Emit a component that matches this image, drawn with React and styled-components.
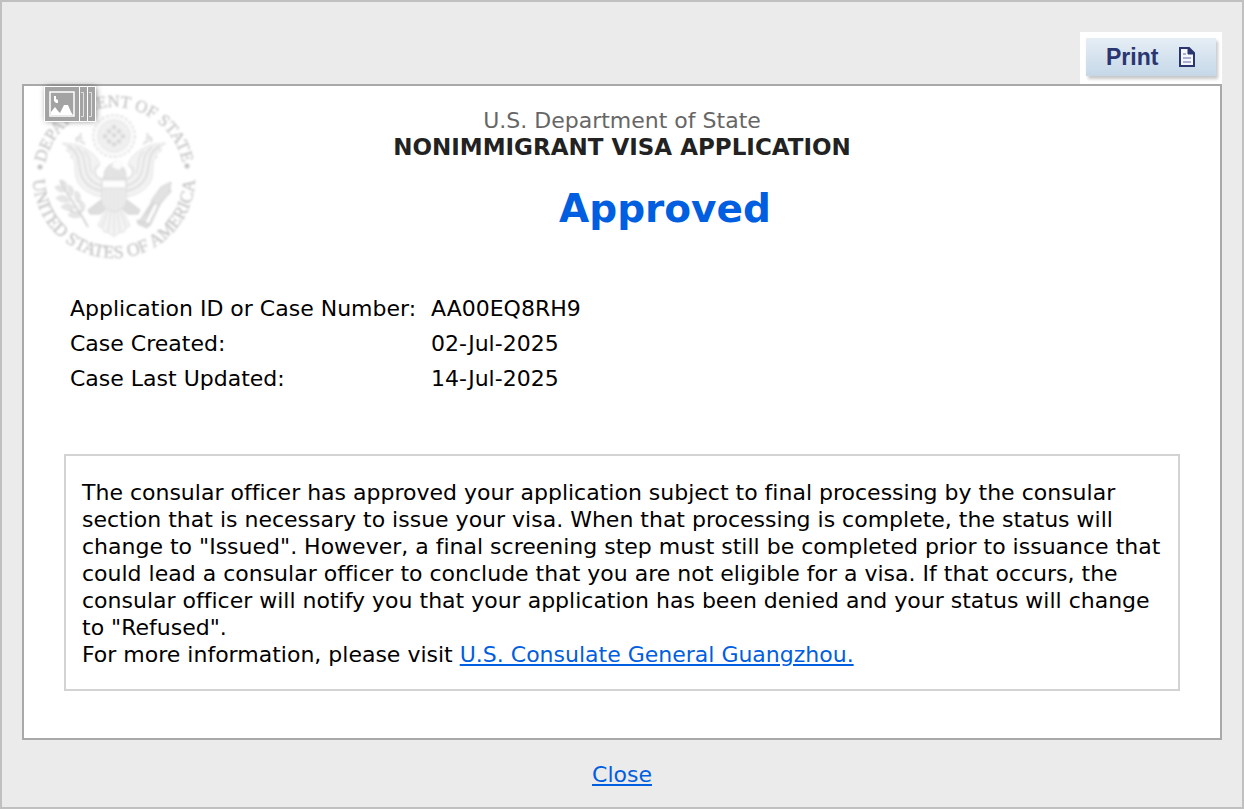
import React from 'react'
import styled, { createGlobalStyle } from 'styled-components'

const GlobalStyle = createGlobalStyle`
  * {
    box-sizing: border-box;
  }
  body {
    margin: 0;
    background: #ebebeb;
    color: #000;
    font-family: Verdana, "DejaVu Sans", sans-serif;
    font-size: 22px;
    font-variant-ligatures: none;
    line-height: 27px;
  }
`

const Frame = styled.div`
  min-height: 100vh;
  padding: 30px 20px 17px;
  border: 2px solid #c0c0c0;
  background: #ebebeb;
`

const Toolbar = styled.div`
  display: flex;
  justify-content: flex-end;
`

const PrintSlot = styled.div`
  padding: 6px 6px 8px;
  background: #fff;
`

const PrintButton = styled.button`
  display: flex;
  align-items: center;
  justify-content: space-between;
  width: 130px;
  height: 38px;
  padding: 0 20px;
  border: 0;
  background: linear-gradient(#e6eef5, #c5d8e8);
  box-shadow: 2px 3px 3px rgba(0, 0, 0, 0.22);
  color: #2b3670;
  font-family: "Liberation Sans", Arial, sans-serif;
  font-size: 23px;
  font-weight: bold;
  cursor: pointer;
`

const Panel = styled.main`
  padding-bottom: 47px;
  border: 2px solid #a9a9a9;
  background: #fff;
`

const Header = styled.header`
  display: grid;
  grid-template-columns: 180px 1fr 180px;
`

const SealBox = styled.div`
  position: relative;
  height: 184px;
`

const Seal = styled.svg`
  display: block;
  filter: blur(0.8px);
`

const GalleryBadge = styled.svg`
  position: absolute;
  left: 14px;
  top: -6px;
`

const Heading = styled.div`
  padding-top: 21px;
  text-align: center;
`

const Department = styled.div`
  color: #666;
`

const Title = styled.h1`
  margin: 0;
  color: #222;
  font-size: 23px;
  line-height: 27px;
`

const Status = styled.h2`
  margin: 24px 0 0;
  padding-left: 86px;
  color: #005ee0;
  font-size: 39px;
  line-height: 48px;
`

const Details = styled.table`
  margin: 21px 46px 0;
  border-collapse: collapse;
  th,
  td {
    height: 35px;
    padding: 0;
    font-weight: normal;
    text-align: left;
  }
  th {
    width: 361px;
  }
`

const Notice = styled.section`
  margin: 58px 40px 0;
  padding: 23px 14px 21px 16px;
  border: 2px solid #d3d3d3;
  p {
    margin: 0;
  }
`

const Link = styled.a`
  color: #005ee0;
  text-decoration: underline;
`

const Footer = styled.footer`
  padding-top: 21px;
  text-align: center;
`

const details = [
  { label: 'Application ID or Case Number:', value: 'AA00EQ8RH9' },
  { label: 'Case Created:', value: '02-Jul-2025' },
  { label: 'Case Last Updated:', value: '14-Jul-2025' },
]

const stars = [
  [0, -9], [-5, -5], [5, -5], [-9, 0], [0, -1], [9, 0], [-5, 5], [5, 5], [0, 8],
]

// one half of the spread wings, mirrored for the other side
const Wing = () => (
  <g>
    <path
      d="M38 57 C46 58 55 58 62 63 C69 67 74 72 76 79 C71 79 69 84 71 89 C73 93 76 94 78 94 L78 111 C65 109 56 102 53 94 C50 86 52 78 50 73 L46 71 L49 69 L42 64 L46 63Z"
      fill="#f3f3f3"
      stroke="#e2e2e2"
    />
    <path d="M44 60 C57 67 54 78 57 88 C60 98 68 103 78 105" stroke="#dedede" strokeWidth="2" />
    <path d="M52 61 C63 69 59 79 63 88 C66 95 71 98 78 100" stroke="#e0e0e0" strokeWidth="2" />
    <path d="M60 65 C68 71 64 80 68 88" stroke="#e4e4e4" strokeWidth="2" />
    <path d="M53 56 C51 51 56 50 58 53 M55 54 L61 58 M56 50 L57 47" stroke="#dadada" strokeWidth="2" />
    <path d="M75 80 C70 82 70 89 75 92 C79 94 82 91 82 87" stroke="#e0e0e0" strokeWidth="1.5" />
  </g>
)

const StateSeal = () => (
  <Seal width="180" height="184" viewBox="0 0 180 184" fill="none" role="img" aria-label="Department of State seal">
    <defs>
      <path id="seal-top" d="M20 91 A70 70 0 0 1 160 91" />
      <path id="seal-bottom" d="M9 91 A81 81 0 0 0 171 91" />
    </defs>
    <g
      fill="#c6c6c6"
      stroke="#c6c6c6"
      strokeWidth="0.3"
      fontFamily="Liberation Serif, Times New Roman, serif"
      textAnchor="middle"
    >
      <text fontSize="17">
        <textPath href="#seal-top" startOffset="50%">DEPARTMENT OF STATE</textPath>
      </text>
      <text fontSize="18">
        <textPath href="#seal-bottom" startOffset="50%">UNITED STATES OF AMERICA</textPath>
      </text>
    </g>
    <circle cx="16" cy="81" r="2.5" fill="#c4c4c4" />
    <circle cx="163" cy="80" r="2.5" fill="#c4c4c4" />

    <circle cx="90" cy="50" r="21" fill="#fafafa" stroke="#e4e4e4" strokeWidth="2" strokeDasharray="3 2" />
    <circle cx="90" cy="50" r="16" fill="#f0f0f0" stroke="#e2e2e2" />
    <g fill="#d6d6d6">
      {stars.map(([x, y]) => (
        <path
          key={`${x},${y}`}
          transform={`translate(${90 + x} ${50 + y})`}
          d="M0 -3 L1 -1 L3 -1 L1.5 1 L2 3 L0 2 L-2 3 L-1.5 1 L-3 -1 L-1 -1Z"
        />
      ))}
    </g>

    <Wing />
    <g transform="translate(180 0) scale(-1 1)">
      <Wing />
    </g>
    <path d="M80 93 C80 85 82 80 88 78 L91 75 L97 76 L96 79 C101 81 102 87 102 93Z" fill="#e3e3e3" stroke="#d6d6d6" />
    <path d="M89 77 C92 73 98 74 99 80 L95 84 L88 81Z" fill="#fcfcfc" />
    <path d="M77 114 L64 124 L66 128 L76 128 L84 121Z M103 114 L116 124 L114 128 L104 128 L97 121Z" fill="#dedede" stroke="#d2d2d2" />
    <path d="M82 122 L74 140 L78 142 L80 146 L85 147 L90 151 L95 147 L100 146 L102 142 L106 140 L98 122Z" fill="#f3f3f3" stroke="#e2e2e2" />
    <path d="M84 124 L78 141 M87 124 L84 146 M90 124 L90 149 M93 124 L96 146 M96 124 L102 141" stroke="#dfdfdf" />
    <path d="M78 94 H102 V115 C102 122 96 124 90 126 C84 124 78 122 78 115Z" fill="#ececec" stroke="#dddddd" />
    <path d="M78 94 H102 V102 H78Z" fill="#fdfdfd" stroke="#dadada" />
    <path d="M82 103 V121 M86 103 V124 M90 103 V125 M94 103 V124 M98 103 V121" stroke="#e2e2e2" />

    <path d="M36 94 C42 108 51 117 64 141 M40 120 C48 127 54 129 59 124" stroke="#d6d6d6" strokeWidth="2" />
    <g fill="#e6e6e6" stroke="#d8d8d8" strokeWidth="0.8">
      <path d="M31 101 Q37 97 41 105 Q35 108 31 101Z M38 94 Q45 97 42 104 Q38 100 38 94Z M32 112 Q40 106 46 115 Q38 118 32 112Z M45 99 Q52 103 48 110 Q43 106 45 99Z M37 121 Q44 114 51 122 Q44 127 37 121Z M52 105 Q59 108 54 117 Q49 112 52 105Z M44 129 Q51 122 57 130 Q50 134 44 129Z M56 114 Q64 119 59 125 Q54 120 56 114Z" />
    </g>

    <path d="M144 99 L132 113 L119 138 M147 104 L136 117 L125 140 M140 103 L128 117 L116 136" stroke="#d8d8d8" strokeWidth="2.5" />
    <path d="M137 101 L147 96 L145 108 L134 119 L127 115Z" fill="#e2e2e2" stroke="#d4d4d4" />
    <path d="M113 134 L126 138 L123 142 L114 138Z" fill="#dddddd" stroke="#d0d0d0" />
  </Seal>
)

const Gallery = () => (
  <GalleryBadge width="70" height="56" viewBox="0 0 70 56" aria-hidden="true">
    <defs>
      <filter id="badge-shadow" x="-20%" y="-20%" width="150%" height="150%">
        <feDropShadow dx="1" dy="0" stdDeviation="3" floodColor="#000" floodOpacity="0.5" />
      </filter>
    </defs>
    <g filter="url(#badge-shadow)">
      <rect x="7" y="7" width="50" height="34" fill="#a3a3a3" />
    </g>
    <path d="M6.5 6.5 H41.5 V41.5 H6.5Z M42 6.5 H49.5 V41.5 H42 M50 6.5 H57.5 V41.5 H50" fill="#a3a3a3" stroke="#fff" />
    <path d="M43 12.5 H45.5 V36.5 H43 M51 12.5 H53.5 V36.5 H51" fill="none" stroke="#e0e0e0" />
    <rect x="12" y="12" width="24" height="24" fill="none" stroke="#fff" strokeWidth="1.5" />
    <path d="M16 16 h2 v3 l2 1 v3 h-2 l-2 -2Z" fill="#fff" />
    <path d="M13 35 V32 L17 27 L20 31 L22 33 L26 25 H30 L33 32 L35 35Z" fill="#fff" />
  </GalleryBadge>
)

const PageIcon = () => (
  <svg width="18" height="22" viewBox="0 0 18 22" aria-hidden="true">
    <path d="M2 2 H11 L16 7 V20 H2Z" fill="#f4f6fc" stroke="#2b3670" strokeWidth="2" />
    <path d="M10 2 V8 H16Z" fill="#2b3670" stroke="#2b3670" />
    <path d="M5 8 H8 M5 12 H13 M5 16 H13" stroke="#8f9bc8" strokeWidth="1.5" />
  </svg>
)

const App = () => {
  return (
    <Frame>
      <GlobalStyle />
      <Toolbar>
        <PrintSlot>
          <PrintButton type="button" onClick={() => window.print()}>
            Print
            <PageIcon />
          </PrintButton>
        </PrintSlot>
      </Toolbar>
      <Panel>
        <Header>
          <SealBox>
            <StateSeal />
            <Gallery />
          </SealBox>
          <Heading>
            <Department>U.S. Department of State</Department>
            <Title>NONIMMIGRANT VISA APPLICATION</Title>
            <Status>Approved</Status>
          </Heading>
        </Header>
        <Details>
          <tbody>
            {details.map((row) => (
              <tr key={row.label}>
                <th scope="row">{row.label}</th>
                <td>{row.value}</td>
              </tr>
            ))}
          </tbody>
        </Details>
        <Notice>
          <p>
            The consular officer has approved your application subject to final processing by the
            consular section that is necessary to issue your visa. When that processing is complete,
            the status will change to "Issued". However, a final screening step must still be
            completed prior to issuance that could lead a consular officer to conclude that you are
            not eligible for a visa. If that occurs, the consular officer will notify you that your
            application has been denied and your status will change to "Refused".
          </p>
          <p>
            For more information, please visit <Link href="#consulate">U.S. Consulate General Guangzhou.</Link>
          </p>
        </Notice>
      </Panel>
      <Footer>
        <Link href="#close">Close</Link>
      </Footer>
    </Frame>
  )
}

export default App
